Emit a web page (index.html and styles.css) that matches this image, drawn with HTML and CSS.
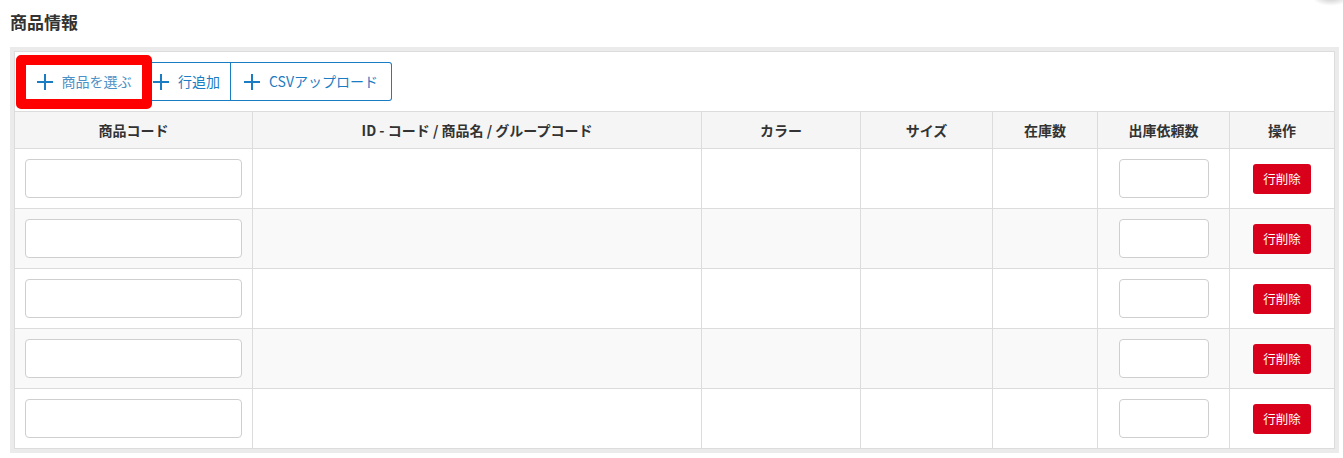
FILE: index.html
```html
<!DOCTYPE html>
<html lang="ja">
<head>
  <meta charset="UTF-8" />
  <title>商品情報</title>
  <link rel="stylesheet" href="styles.css">
</head>
<body>
<div class="corner-shadow"></div>
<h2 class="section-title">商品情報</h2>
<div class="panel">
  <div class="panel-body">
    <div class="toolbar">
      <div class="btn-group">
        <button class="btn btn-select">
          <svg viewBox="0 0 16 16" width="16" height="16"><path d="M8 0v16M0 8h16" stroke="currentColor" stroke-width="2" fill="none"/></svg>
          <span class="btn-label">商品を選ぶ</span>
        </button>
        <button class="btn btn-add">
          <svg viewBox="0 0 16 16" width="16" height="16"><path d="M8 0v16M0 8h16" stroke="currentColor" stroke-width="2" fill="none"/></svg>
          <span>行追加</span>
        </button>
        <button class="btn btn-csv">
          <svg viewBox="0 0 16 16" width="16" height="16"><path d="M8 0v16M0 8h16" stroke="currentColor" stroke-width="2" fill="none"/></svg>
          <span>CSVアップロード</span>
        </button>
      </div>
      <div class="highlight"></div>
    </div>
    <table class="items">
      <colgroup>
        <col class="c-code"><col class="c-name"><col class="c-color"><col class="c-size">
        <col class="c-stock"><col class="c-qty"><col class="c-op">
      </colgroup>
      <thead>
        <tr>
          <th>商品コード</th>
          <th>ID - コード / 商品名 / グループコード</th>
          <th>カラー</th>
          <th>サイズ</th>
          <th>在庫数</th>
          <th>出庫依頼数</th>
          <th>操作</th>
        </tr>
      </thead>
      <tbody id="rows"></tbody>
    </table>
  </div>
</div>

<script>
const tbody = document.getElementById('rows');
for (let i = 0; i < 5; i++) {
  const tr = document.createElement('tr');
  tr.innerHTML = `
    <td><input type="text" class="input-code"></td>
    <td></td>
    <td></td>
    <td></td>
    <td></td>
    <td><input type="text" class="input-qty"></td>
    <td><button class="btn-delete">行削除</button></td>`;
  tbody.appendChild(tr);
}
</script>
</body>
</html>
```

FILE: styles.css
```css
body {
  margin: 0;
  padding-top: 10px;
  font-family: "Noto Sans CJK JP", "Noto Sans", sans-serif;
  background: #fff;
  color: #333;
}
.corner-shadow {
  position: absolute;
  top: -14px;
  right: -8px;
  width: 40px;
  height: 20px;
  border-radius: 50%;
  background: radial-gradient(ellipse at center, rgba(0,0,0,0.25), rgba(0,0,0,0) 70%);
}
.section-title {
  margin: 0 0 13px 10px;
  font-size: 17px;
  line-height: 24px;
  font-weight: bold;
}
.panel {
  margin: 0 4px 0 10px;
  padding: 4px;
  background: #ebebeb;
}
.panel-body {
  background: #fff;
  border: 1px solid #dcdcdc;
}
.toolbar {
  position: relative;
  height: 59px;
  padding-left: 10px;
  box-sizing: border-box;
  padding-top: 10px;
}
.btn-group {
  display: flex;
  height: 39px;
}
.btn {
  display: flex;
  align-items: center;
  justify-content: center;
  gap: 9px;
  height: 39px;
  padding: 0 0 2px;
  background: #fff;
  border: 1px solid #1a7cc2;
  border-left: none;
  color: #1a7cc2;
  font-family: inherit;
  font-size: 14px;
  cursor: pointer;
}
.btn svg {
  margin-top: 2px;
}
.btn:first-child {
  border-left: 1px solid #1a7cc2;
  border-radius: 3px 0 0 3px;
}
.btn:last-child {
  border-radius: 0 3px 3px 0;
}
.btn-select { width: 118px; }
.btn-add { width: 88px; }
.btn-csv { width: 161px; }
.btn-label {
  color: #4b90c6;
}
.highlight {
  position: absolute;
  left: 1px;
  top: 3px;
  width: 136px;
  height: 54px;
  box-sizing: border-box;
  border: 10px solid #ff0000;
  border-radius: 5px;
}
.items {
  width: 100%;
  table-layout: fixed;
  border-collapse: separate;
  border-spacing: 0;
}
.c-code { width: 237px; }
.c-name { width: 449px; }
.c-color { width: 159px; }
.c-size { width: 132px; }
.c-stock { width: 105px; }
.c-qty { width: 132px; }
.c-op { width: 105px; }
.items th, .items td {
  border-top: 1px solid #dcdcdc;
  border-left: 1px solid #dcdcdc;
  padding: 0;
  text-align: center;
}
.items th:first-child, .items td:first-child {
  border-left: none;
}
.items th {
  height: 36px;
  background: #f5f5f5;
  font-size: 14px;
  font-weight: bold;
  color: #333;
}
.items td {
  height: 59px;
  background: #fff;
}
.items tbody tr:nth-child(even) td {
  background: #f9f9f9;
}
.items input {
  display: block;
  margin: 0 auto;
  height: 39px;
  box-sizing: border-box;
  border: 1px solid #cfcfcf;
  border-radius: 4px;
  background: #fff;
}
.input-code { width: 217px; }
.input-qty { width: 90px; }
.btn-delete {
  width: 58px;
  height: 30px;
  background: #d9001b;
  color: #fff;
  border: none;
  border-radius: 3px;
  font-family: inherit;
  font-size: 12.5px;
  cursor: pointer;
}
```
